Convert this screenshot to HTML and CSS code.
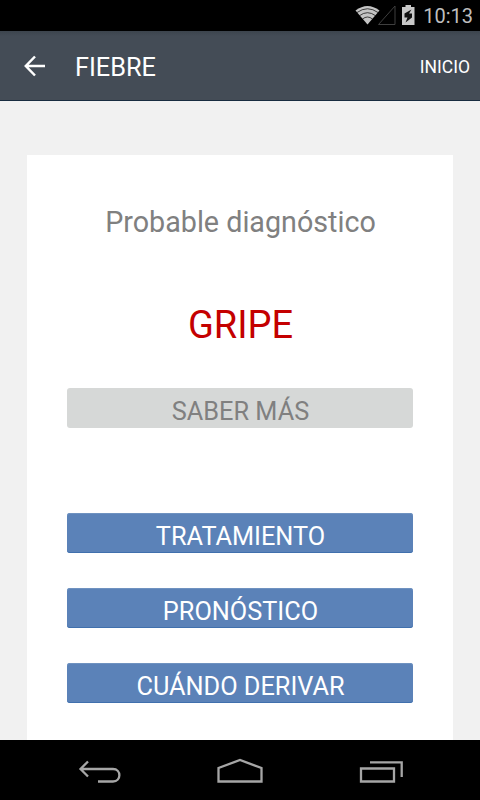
FILE: index.html
```html
<!DOCTYPE html>
<html lang="es">
<head>
<meta charset="utf-8">
<title>Fiebre</title>
<link rel="stylesheet" href="styles.css">
</head>
<body>
<div class="statusbar">
  <svg class="status-icons" width="62" height="30" viewBox="355 0 62 30">
    <path d="M355.500 10.500Q367.500 1.500 379.500 10.500L367.500 24.500Z" fill="#c4c4c4"/>
    <path d="M357 12.500Q367.500 5 378 12.500M359.500 15.700Q367.500 9.700 375.500 15.700M362.500 19Q367.500 15 372.500 19" fill="none" stroke="#000" stroke-width=".7"/>
    <path d="M395 6V24.500H378.500Z" fill="none" stroke="#3f3f3f"/>
    <path d="M405.500 5h5.500v2h3.500v18h-12.500v-18h3.500z" fill="#c8c8c8"/>
    <path d="M411.500 9.500L404.500 13.500V17.500H407.500L405.500 22.500L412 17.500V13.500H409Z" fill="#111"/>
  </svg>
  <span class="clock">10:13</span>
</div>
<header class="appbar">
  <svg class="back" width="22" height="22" viewBox="0 0 22 22"><path d="M21 11H2M11 1.500L1.800 11L11 20.500" fill="none" stroke="#fff" stroke-width="2.500"/></svg>
  <h1 class="title">FIEBRE</h1>
  <a class="home-link">INICIO</a>
</header>
<main class="content">
  <section class="card">
    <h2 class="subtitle">Probable diagnóstico</h2>
    <p class="diagnosis">GRIPE</p>
    <button class="btn btn-more">SABER MÁS</button>
    <button class="btn btn-blue">TRATAMIENTO</button>
    <button class="btn btn-blue">PRONÓSTICO</button>
    <button class="btn btn-blue">CUÁNDO DERIVAR</button>
  </section>
</main>
<nav class="navbar">
  <svg width="480" height="60" viewBox="0 740 480 60" fill="none" stroke="#a6a6a6" stroke-width="2.300">
    <path d="M80.500 769H113C121.500 769 121.500 781.500 113 781.500H98M88 761.500L80.500 769L88 776.500"/>
    <path d="M218.500 781.500V768L240 760L261.500 768V781.500Z"/>
    <path d="M361 768.500H394V781.500H361ZM370 762.300H401.700V777"/>
  </svg>
</nav>
</body>
</html>
```
FILE: styles.css
```css
* { box-sizing: border-box; }
body {
  margin: 0;
  width: 480px;
  height: 800px;
  display: flex;
  flex-direction: column;
  overflow: hidden;
  background: #f1f1f1;
  font-family: Roboto, "Liberation Sans", sans-serif;
}
h1, h2, p { margin: 0; font-weight: 400; }
.statusbar {
  height: 31px;
  flex: none;
  display: flex;
  justify-content: flex-end;
  padding-right: 7px;
  background: #000;
}
.status-icons { margin-right: 6px; }
.clock {
  color: #bebebe;
  font-size: 20px;
  line-height: 32px;
}
.appbar {
  height: 70px;
  flex: none;
  display: flex;
  align-items: center;
  padding: 2px 10px 0 24px;
  color: #fff;
  background: linear-gradient(#3c444d, #444c56 5px);
  border-bottom: 1px solid #182c40;
}
.back { margin: 0 29px 2px 0; }
.title { font-size: 25.3px; line-height: 30px; padding-top: 2px; }
.home-link { margin-left: auto; font-size: 17.5px; line-height: 24px; }
.content {
  flex: 1;
  min-height: 0;
  padding: 54px 27px 0;
}
.card {
  height: 585px;
  padding: 47px 40px 0;
  background: #fff;
  text-align: center;
}
.subtitle { padding-left: 1px; color: #808080; font-size: 28.7px; line-height: 40px; }
.diagnosis { margin-top: 58px; padding-left: 1px; color: #c40000; font-size: 38px; line-height: 50px; }
.btn {
  display: block;
  width: 346px;
  height: 40px;
  margin: 0 0 35px;
  padding: 7px 0 0 1px;
  border: 0;
  border-radius: 3px;
  font: 400 25.3px/33px Roboto, "Liberation Sans", sans-serif;
}
.btn-more { margin: 38px 0 85px; background: #d6d8d7; color: #808080; }
.btn-blue {
  background: #5b82b8;
  color: #fff;
  box-shadow: inset 0 -1px #4070ad, inset 0 1px #6f92c0;
}
.navbar { height: 60px; flex: none; background: #000; }
.navbar svg { display: block; }
```
